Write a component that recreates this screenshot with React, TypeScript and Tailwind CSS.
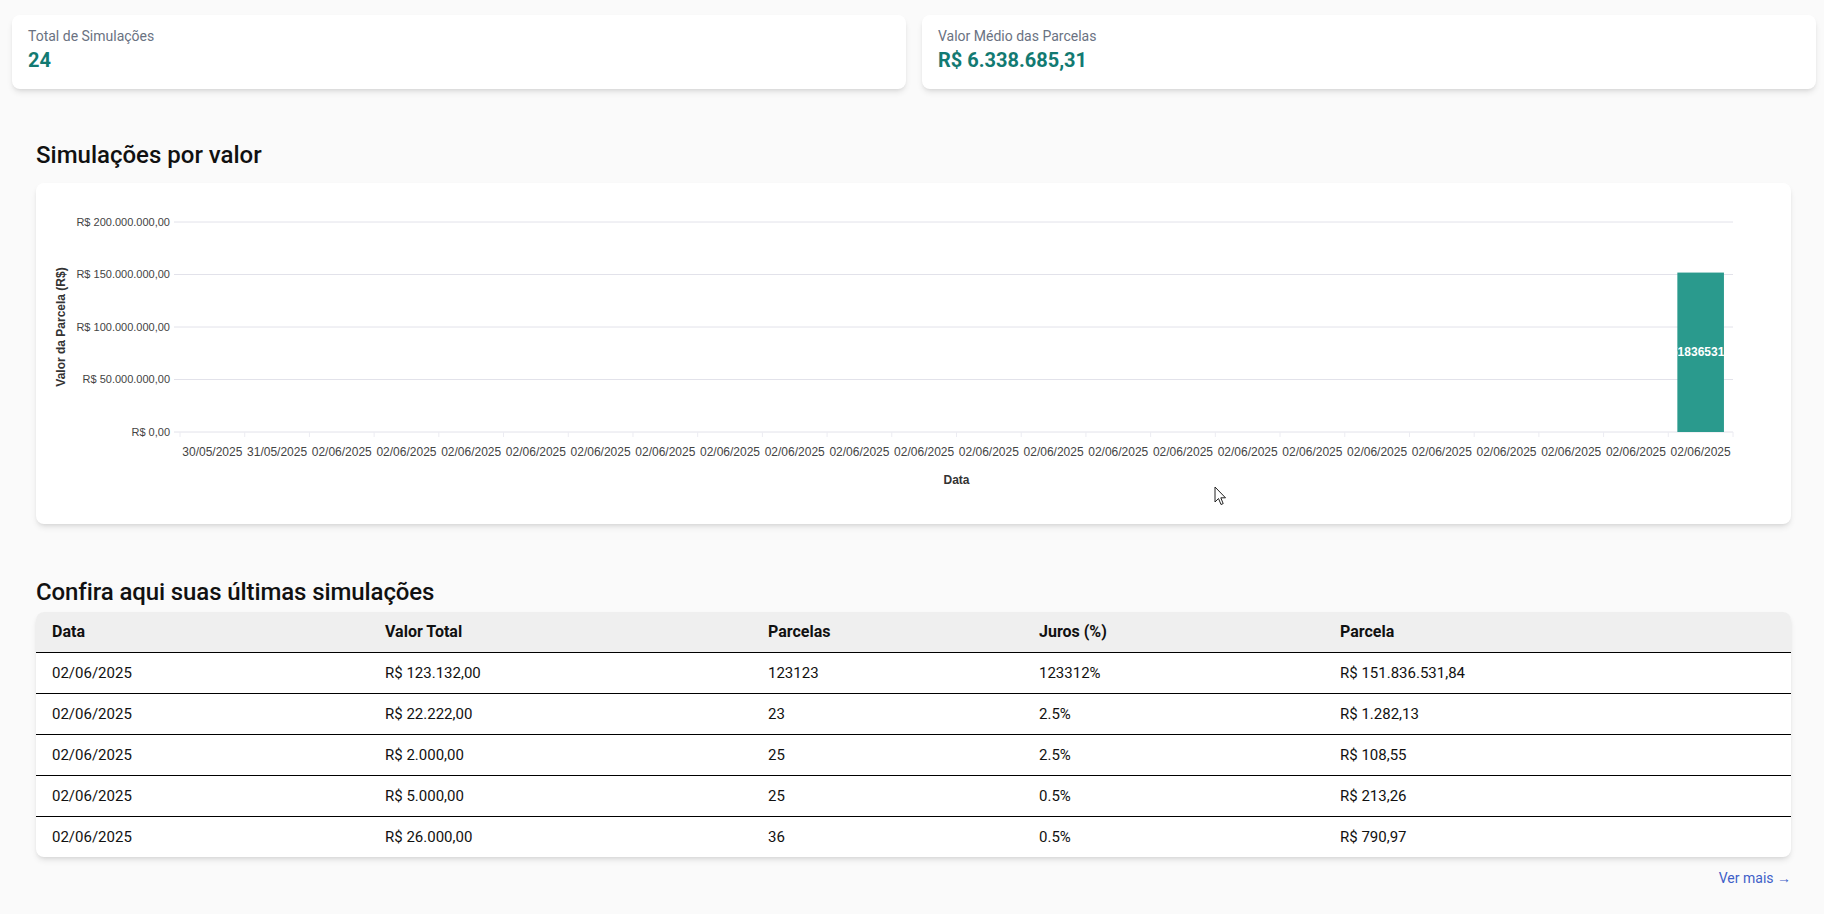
import React from "react";

const labels = ["30/05/2025", "31/05/2025", ...Array(22).fill("02/06/2025")];
const values = [...Array(23).fill(0), 151836531.84];

const rows = [
  ["02/06/2025", "R$ 123.132,00", "123123", "123312%", "R$ 151.836.531,84"],
  ["02/06/2025", "R$ 22.222,00", "23", "2.5%", "R$ 1.282,13"],
  ["02/06/2025", "R$ 2.000,00", "25", "2.5%", "R$ 108,55"],
  ["02/06/2025", "R$ 5.000,00", "25", "0.5%", "R$ 213,26"],
  ["02/06/2025", "R$ 26.000,00", "36", "0.5%", "R$ 790,97"],
];

function StatCard({ label, value }: { label: string; value: string }) {
  return (
    <div className="bg-white rounded-lg shadow-md pl-4 pt-[11px] pb-[15px]">
      <div className="text-sm leading-5 text-gray-500">{label}</div>
      <div className="text-xl leading-7 font-bold text-[#127a72]">{value}</div>
    </div>
  );
}

function BarChart() {
  const left = 144;
  const right = 1697;
  const top = 39;
  const bottom = 249;
  const slot = (right - left) / labels.length;
  const max = 200000000;
  const ticks = [200000000, 150000000, 100000000, 50000000, 0];
  const font = "'Liberation Sans', Arial, sans-serif";

  return (
    <svg width="1755" height="341" className="block">
      <defs>
        <clipPath id="barclip">
          <rect x={left + slot * 23 + slot * 0.14} y={0} width={slot * 0.72} height={bottom} />
        </clipPath>
      </defs>
      {ticks.map((t, i) => {
        const y = top + (i * (bottom - top)) / 4;
        return (
          <g key={t}>
            <line x1={left - 6} x2={right} y1={y} y2={y} stroke="#e2e2ea" strokeWidth="1" />
            <text x={134} y={y} dy="0.35em" textAnchor="end" fontSize="11" fill="#444" fontFamily={font}>
              {"R$ " + t.toLocaleString("pt-BR", { minimumFractionDigits: 2 })}
            </text>
          </g>
        );
      })}
      {labels.map((l, i) => (
        <g key={i}>
          <line x1={left + slot * i} x2={left + slot * i} y1={bottom} y2={bottom + 5} stroke="#ececf2" />
          <text x={left + slot * (i + 0.5)} y={269} dy="0.35em" textAnchor="middle" fontSize="12" fill="#444" fontFamily={font}>
            {l}
          </text>
        </g>
      ))}
      <line x1={right} x2={right} y1={bottom} y2={bottom + 5} stroke="#ececf2" />
      {values.map((v, i) => {
        if (!v) return null;
        const h = (v / max) * (bottom - top);
        const x = left + slot * i + slot * 0.14;
        return (
          <g key={i}>
            <rect x={x} y={bottom - h} width={slot * 0.72} height={h} fill="#2a9a8d" />
            <text
              x={x + slot * 0.36 + 2}
              y={bottom - h / 2}
              dy="0.35em"
              textAnchor="middle"
              fontSize="12"
              fontWeight="bold"
              fill="#fff"
              fontFamily={font}
              clipPath="url(#barclip)"
            >
              151836531.84
            </text>
          </g>
        );
      })}
      <text x={(left + right) / 2} y={297} dy="0.35em" textAnchor="middle" fontSize="12" fontWeight="bold" fill="#333" fontFamily={font}>
        Data
      </text>
      <text
        transform="translate(25 144) rotate(-90)"
        textAnchor="middle"
        dy="0.35em"
        fontSize="12"
        fontWeight="bold"
        fill="#333"
        fontFamily={font}
      >
        Valor da Parcela (R$)
      </text>
    </svg>
  );
}

export default function App() {
  const cols = ["w-[333px]", "w-[383px]", "w-[271px]", "w-[301px]", ""];
  return (
    <div className="min-h-screen bg-[#fafafa] font-[Roboto,'Liberation_Sans',sans-serif] text-[#111]">
      {/* Stats */}
      <div className="grid grid-cols-2 gap-4 pl-3 pr-2 pt-[15px]">
        <StatCard label="Total de Simulações" value="24" />
        <StatCard label="Valor Médio das Parcelas" value="R$ 6.338.685,31" />
      </div>

      <div className="pl-9 pr-[33px]">
        {/* Chart */}
        <h2 className="mt-[50px] mb-3 text-2xl leading-8 font-medium">Simulações por valor</h2>
        <div className="relative bg-white rounded-lg shadow-md overflow-hidden">
          <BarChart />
          <svg className="absolute left-[1178px] top-[303px]" width="14" height="21" viewBox="0 0 14 21">
            <path d="M1 1 L1 16 L4.5 12.5 L7 18.5 L9.2 17.6 L6.8 11.8 L11.5 11.8 Z" fill="#fff" stroke="#222" strokeWidth="1" strokeLinejoin="round" />
          </svg>
        </div>

        {/* Latest simulations */}
        <h2 className="mt-[52px] mb-1 text-2xl leading-8 font-medium tracking-[-0.1px]">Confira aqui suas últimas simulações</h2>
        <div className="bg-white rounded-lg shadow-md overflow-hidden">
          <table className="w-full table-fixed border-collapse text-left">
            <thead>
              <tr className="bg-[#efefef] border-b border-black">
                {["Data", "Valor Total", "Parcelas", "Juros (%)", "Parcela"].map((h, i) => (
                  <th key={h} className={`${cols[i]} px-4 py-2 text-base leading-6 font-bold`}>
                    {h}
                  </th>
                ))}
              </tr>
            </thead>
            <tbody>
              {rows.map((r, ri) => (
                <tr key={ri} className={ri < rows.length - 1 ? "border-b border-black" : ""}>
                  {r.map((c, ci) => (
                    <td key={ci} className="px-4 py-2 text-[15px] leading-6">
                      {c}
                    </td>
                  ))}
                </tr>
              ))}
            </tbody>
          </table>
        </div>
        <div className="flex justify-end mt-[11px]">
          <a href="#" className="text-sm leading-5 text-[#3f5fc8]">
            Ver mais →
          </a>
        </div>
      </div>
    </div>
  );
}
